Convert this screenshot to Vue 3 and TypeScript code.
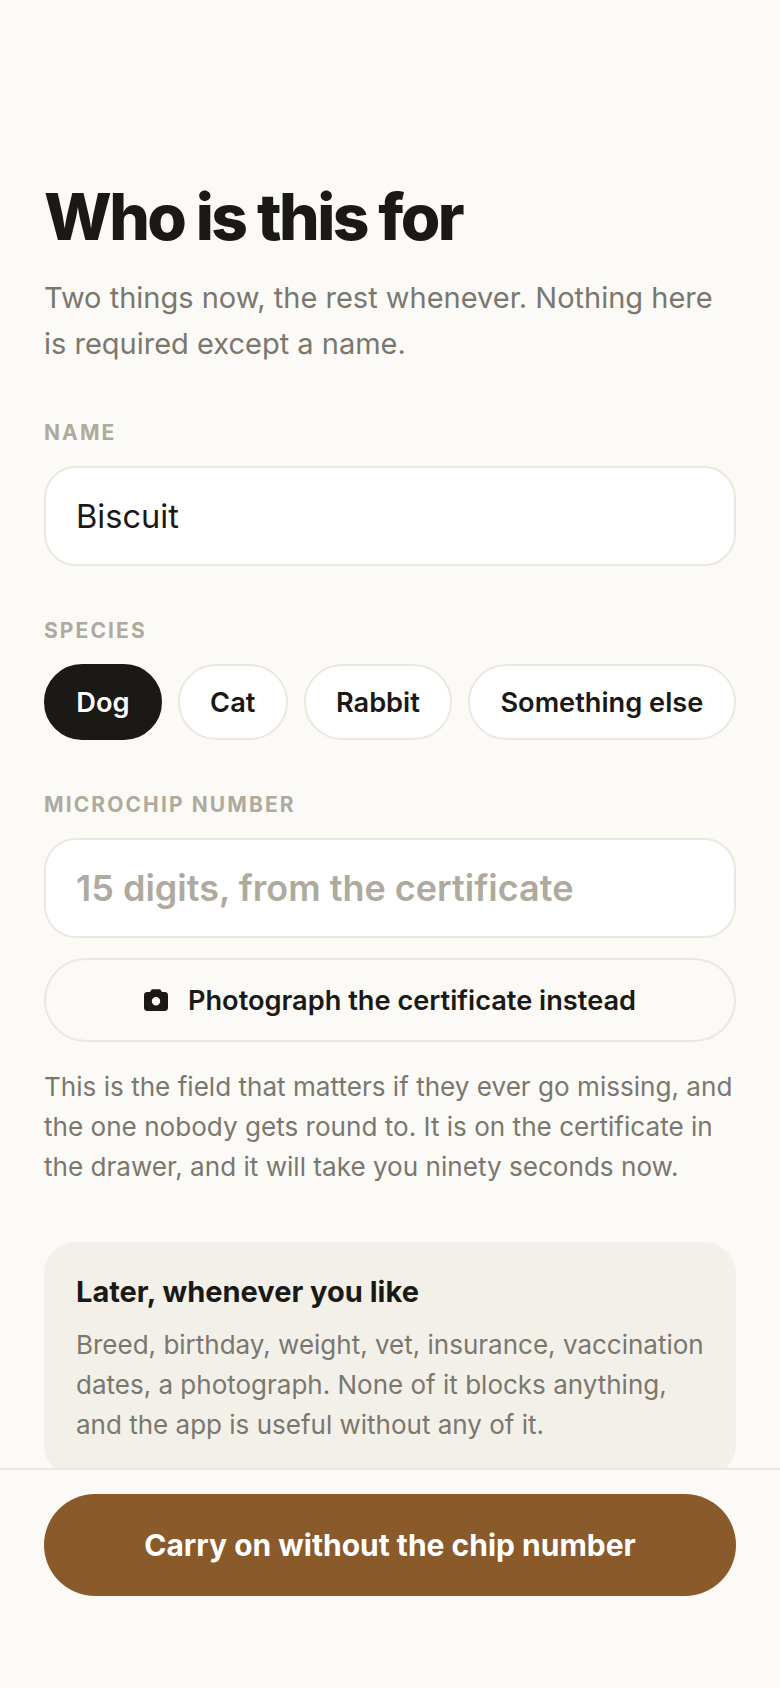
<template>
  <div class="screen">
    <main class="content">
      <h1 class="title">Who is this for</h1>
      <p class="lead">Two things now, the rest whenever. Nothing here is required except a name.</p>

      <label class="label label-name" for="pet-name">Name</label>
      <input id="pet-name" class="field" type="text" value="Biscuit" />

      <div class="label label-species">Species</div>
      <div class="chips">
        <button
          v-for="item in species"
          :key="item"
          type="button"
          class="chip"
          :class="{ active: item === selected }"
          @click="selected = item"
        >
          {{ item }}
        </button>
      </div>

      <label class="label label-chip" for="chip-number">Microchip number</label>
      <input id="chip-number" class="field chip-field" type="text" placeholder="15 digits, from the certificate" />

      <button type="button" class="photo-btn">
        <svg class="camera" viewBox="0 0 24 24" aria-hidden="true">
          <path
            fill-rule="evenodd"
            d="M8.6 1.2h6.8c.6 0 1.1.3 1.4.8L18 4h2.6A3.4 3.4 0 0 1 24 7.4v12.2a3.4 3.4 0 0 1-3.4 3.4H3.4A3.4 3.4 0 0 1 0 19.600V7.400A3.400 3.400 0 0 1 3.400 4H6l1.200-2c.3-.5.800-.8 1.400-.8ZM12 9a4.200 4.200 0 1 0 0 8.400A4.200 4.200 0 0 0 12 9Z"
          />
        </svg>
        Photograph the certificate instead
      </button>

      <p class="help">This is the field that matters if they ever go missing, and the one nobody gets round to. It is on the certificate in the drawer, and it will take you ninety seconds now.</p>

      <section class="later">
        <h2>Later, whenever you like</h2>
        <p>Breed, birthday, weight, vet, insurance, vaccination dates, a photograph. None of it blocks anything, and the app is useful without any of it.</p>
      </section>
    </main>

    <footer class="footer">
      <button type="button" class="primary">Carry on without the chip number</button>
    </footer>
  </div>
</template>

<script setup lang="ts">
import { ref } from 'vue'

const species: string[] = ['Dog', 'Cat', 'Rabbit', 'Something else']
const selected = ref('Dog')
</script>

<style>
html,
body {
  margin: 0;
  background: #fbfaf6;
}
</style>

<style scoped>
.screen {
  width: 780px;
  height: 1688px;
  display: flex;
  flex-direction: column;
  overflow: hidden;
  background: #fbfaf6;
  color: #1a1915;
  font-family: Inter, 'Liberation Sans', sans-serif;
}

.content {
  flex: 1;
  min-height: 0;
  overflow: hidden;
  padding: 181px 44px 0;
  box-sizing: border-box;
}

.title {
  margin: 0;
  font-size: 64px;
  line-height: 72px;
  font-weight: 800;
  letter-spacing: -0.04em;
}

.lead {
  margin: 22px 0 0;
  font-size: 29px;
  line-height: 46px;
  color: #7a776e;
}

.label {
  display: block;
  font-size: 21px;
  line-height: 24px;
  font-weight: 700;
  letter-spacing: 0.1em;
  text-transform: uppercase;
  color: #aeaa9e;
}

.label-name {
  margin-top: 54px;
}

.label-species {
  margin-top: 53px;
}

.label-chip {
  margin-top: 53px;
}

.field {
  display: block;
  width: 100%;
  height: 100px;
  margin-top: 21px;
  padding: 0 30px;
  box-sizing: border-box;
  border: 2px solid #ebe8df;
  border-radius: 32px;
  background: #fff;
  color: #1a1915;
  font-family: inherit;
  font-size: 32.6px;
  outline: none;
}

.chip-field {
  font-size: 36px;
  font-weight: 600;
}

.chip-field::placeholder {
  color: #aeaa9e;
  opacity: 1;
}

.chips {
  display: flex;
  gap: 16px;
  margin-top: 21px;
}

.chip {
  height: 76px;
  padding: 0 30.3px;
  border: 2px solid #ebe8df;
  border-radius: 38px;
  background: #fff;
  color: #1a1915;
  font-family: inherit;
  font-size: 27.2px;
  font-weight: 600;
  white-space: nowrap;
}

.chip.active {
  border-color: #1a1915;
  background: #1a1915;
  color: #fff;
}

.photo-btn {
  display: flex;
  align-items: center;
  justify-content: center;
  gap: 20px;
  width: 100%;
  height: 84px;
  margin-top: 20px;
  border: 2px solid #ebe8df;
  border-radius: 42px;
  background: transparent;
  color: #1a1915;
  font-family: inherit;
  font-size: 27.2px;
  font-weight: 600;
}

.camera {
  width: 24px;
  height: 24px;
  fill: #1a1915;
  flex: none;
}

.help {
  margin: 25px 0 0;
  font-size: 26.1px;
  line-height: 40px;
  color: #7a776e;
}

.later {
  margin-top: 55px;
  padding: 30px 32px 32px;
  border-radius: 32px;
  background: #f3f0ea;
}

.later h2 {
  margin: 0;
  font-size: 29px;
  line-height: 40px;
  font-weight: 700;
}

.later p {
  margin: 13px 0 0;
  font-size: 26px;
  line-height: 40px;
  color: #7a776e;
}

.footer {
  flex: none;
  height: 220px;
  box-sizing: border-box;
  padding: 24px 44px 0;
  border-top: 2px solid #ebe8df;
  background: #fbfaf6;
}

.primary {
  display: block;
  width: 100%;
  height: 102px;
  border: 0;
  border-radius: 51px;
  background: #8a5a2b;
  color: #fff;
  font-family: inherit;
  font-size: 30px;
  font-weight: 700;
}
</style>
